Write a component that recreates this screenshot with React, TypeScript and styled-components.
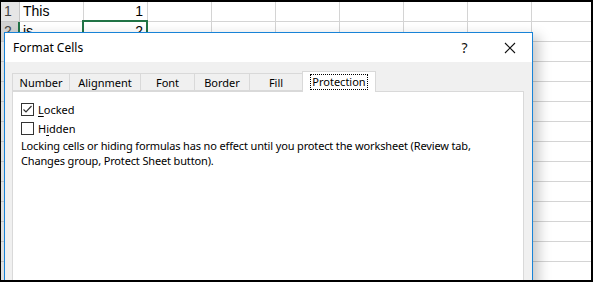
import * as React from 'react';
import styled, { createGlobalStyle } from 'styled-components';

const GlobalStyle = createGlobalStyle`
  html, body {
    margin: 0;
    padding: 0;
    background: #ffffff;
    overflow: hidden;
  }
`;

const Frame = styled.div`
  position: relative;
  box-sizing: border-box;
  width: 593px;
  height: 282px;
  overflow: hidden;
  background: #ffffff;
  border-style: solid;
  border-color: #000000;
  border-width: 2px 2px 2px 1px;
`;

// ---- spreadsheet behind the dialog ----

const Sheet = styled.div`
  display: flex;
  flex-direction: column;
  font-family: 'Liberation Sans', Arial, sans-serif;
  font-size: 14px;
  color: #000000;
`;

const Row = styled.div`
  display: grid;
  grid-template-columns: 19px repeat(9, 64px);
  height: 20px;
`;

const RowHeader = styled.div<{ $active?: boolean }>`
  box-sizing: border-box;
  height: 20px;
  background: ${(p) => (p.$active ? '#d2d2d2' : '#e6e6e6')};
  border-bottom: 1px solid #c6c6c6;
  border-right: ${(p) => (p.$active ? '2px solid #217346' : '1px solid #c6c6c6')};
  color: #444444;
  font-size: 14px;
  line-height: 19px;
  padding-left: 3px;
  white-space: nowrap;
  overflow: hidden;
`;

const Cell = styled.div<{ $align?: 'left' | 'right'; $selected?: boolean }>`
  position: relative;
  box-sizing: border-box;
  height: 20px;
  border-right: 1px solid #d4d4d4;
  border-bottom: 1px solid #d4d4d4;
  line-height: 19px;
  padding: 0 4px 0 3px;
  text-align: ${(p) => p.$align ?? 'left'};
  white-space: nowrap;
  ${(p) =>
    p.$selected &&
    `
    &::after {
      content: '';
      position: absolute;
      left: -2px;
      top: -2px;
      right: -1px;
      bottom: -1px;
      border: 2px solid #217346;
    }
  `}
`;

// ---- dialog window ----

const Dialog = styled.div`
  position: absolute;
  left: 3px;
  top: 30px;
  width: 529px;
  height: 260px;
  box-sizing: border-box;
  border: 1px solid #1883d7;
  background: #f0f0f0;
  box-shadow: 6px 4px 12px rgba(0, 0, 0, 0.22);
  display: flex;
  flex-direction: column;
  font-family: 'Noto Sans', 'Open Sans', sans-serif;
  font-size: 11px;
  color: #000000;
`;

const TitleBar = styled.div`
  height: 29px;
  background: #ffffff;
  display: flex;
  align-items: center;
  padding-left: 8px;
  font-size: 12px;
`;

const Title = styled.div`
  flex: 1;
`;

const TitleButton = styled.div`
  width: 45px;
  height: 29px;
  display: flex;
  align-items: center;
  justify-content: center;
  color: #111111;
  font-size: 14px;
`;

const Body = styled.div`
  flex: 1;
  display: flex;
  flex-direction: column;
  padding: 8px 7px 0 7px;
`;

const TabStrip = styled.div`
  display: flex;
  align-items: flex-end;
  height: 21px;
`;

const Tab = styled.div<{ $active?: boolean; $w: number }>`
  box-sizing: border-box;
  width: ${(p) => p.$w}px;
  height: ${(p) => (p.$active ? 21 : 18)}px;
  margin-bottom: ${(p) => (p.$active ? -1 : 0)}px;
  background: ${(p) => (p.$active ? '#ffffff' : '#f0f0f0')};
  border: 1px solid #d9d9d9;
  border-bottom: ${(p) => (p.$active ? 'none' : '1px solid #d9d9d9')};
  margin-left: -1px;
  display: flex;
  align-items: center;
  justify-content: center;
  position: relative;
  z-index: ${(p) => (p.$active ? 2 : 1)};
  &:first-child {
    margin-left: 0;
  }
`;

const FocusLabel = styled.span`
  outline: 1px dotted #000000;
  padding: 0 1px;
  line-height: 14px;
`;

const Panel = styled.div`
  flex: 1;
  margin-right: 1px;
  background: #ffffff;
  border: 1px solid #d9d9d9;
  padding: 8px 8px 0 8px;
  display: flex;
  flex-direction: column;
`;

const CheckRow = styled.label`
  display: flex;
  align-items: center;
  gap: 4px;
  height: 19px;
`;

const Box = styled.span`
  width: 13px;
  height: 13px;
  box-sizing: border-box;
  border: 1px solid #333333;
  background: #ffffff;
  display: flex;
  align-items: center;
  justify-content: center;
`;

const Note = styled.p`
  margin: 0;
  line-height: 15px;
  letter-spacing: -0.15px;
  white-space: nowrap;
`;

const Key = styled.u`
  text-underline-offset: 2px;
`;

const columns = ['', '', '', '', '', '', '', '', ''];

export default function App() {
  const rows = Array.from({ length: 14 }, (_, i) => i + 1);
  return (
    <>
      <GlobalStyle />
      <Frame>
        <Sheet>
          {rows.map((n) => (
            <Row key={n}>
              <RowHeader $active={n === 2}>{n}</RowHeader>
              {columns.map((_, c) => {
                if (n === 1 && c === 0) return <Cell key={c}>This</Cell>;
                if (n === 1 && c === 1)
                  return (
                    <Cell key={c} $align="right">
                      1
                    </Cell>
                  );
                if (n === 2 && c === 0) return <Cell key={c}>is</Cell>;
                if (n === 2 && c === 1)
                  return (
                    <Cell key={c} $align="right" $selected>
                      2
                    </Cell>
                  );
                return <Cell key={c} />;
              })}
            </Row>
          ))}
        </Sheet>

        <Dialog>
          <TitleBar>
            <Title>Format Cells</Title>
            <TitleButton>?</TitleButton>
            <TitleButton>
              <svg width="12" height="12" viewBox="0 0 12 12">
                <path d="M1 1L11 11M11 1L1 11" stroke="#111" strokeWidth="1.1" fill="none" />
              </svg>
            </TitleButton>
          </TitleBar>
          <Body>
            <TabStrip>
              <Tab $w={58}>Number</Tab>
              <Tab $w={72}>Alignment</Tab>
              <Tab $w={55}>Font</Tab>
              <Tab $w={56}>Border</Tab>
              <Tab $w={54}>Fill</Tab>
              <Tab $w={74} $active>
                <FocusLabel>Protection</FocusLabel>
              </Tab>
            </TabStrip>
            <Panel>
              <CheckRow>
                <Box>
                  <svg width="11" height="11" viewBox="0 0 11 11">
                    <path d="M1.5 5.5L4 8L9.5 2" stroke="#333" strokeWidth="1.2" fill="none" />
                  </svg>
                </Box>
                <span>
                  <Key>L</Key>ocked
                </span>
              </CheckRow>
              <CheckRow>
                <Box />
                <span>
                  H<Key>i</Key>dden
                </span>
              </CheckRow>
              <Note>
                Locking cells or hiding formulas has no effect until you protect the worksheet (Review tab,
                <br />
                Changes group, Protect Sheet button).
              </Note>
            </Panel>
          </Body>
        </Dialog>
      </Frame>
    </>
  );
}
